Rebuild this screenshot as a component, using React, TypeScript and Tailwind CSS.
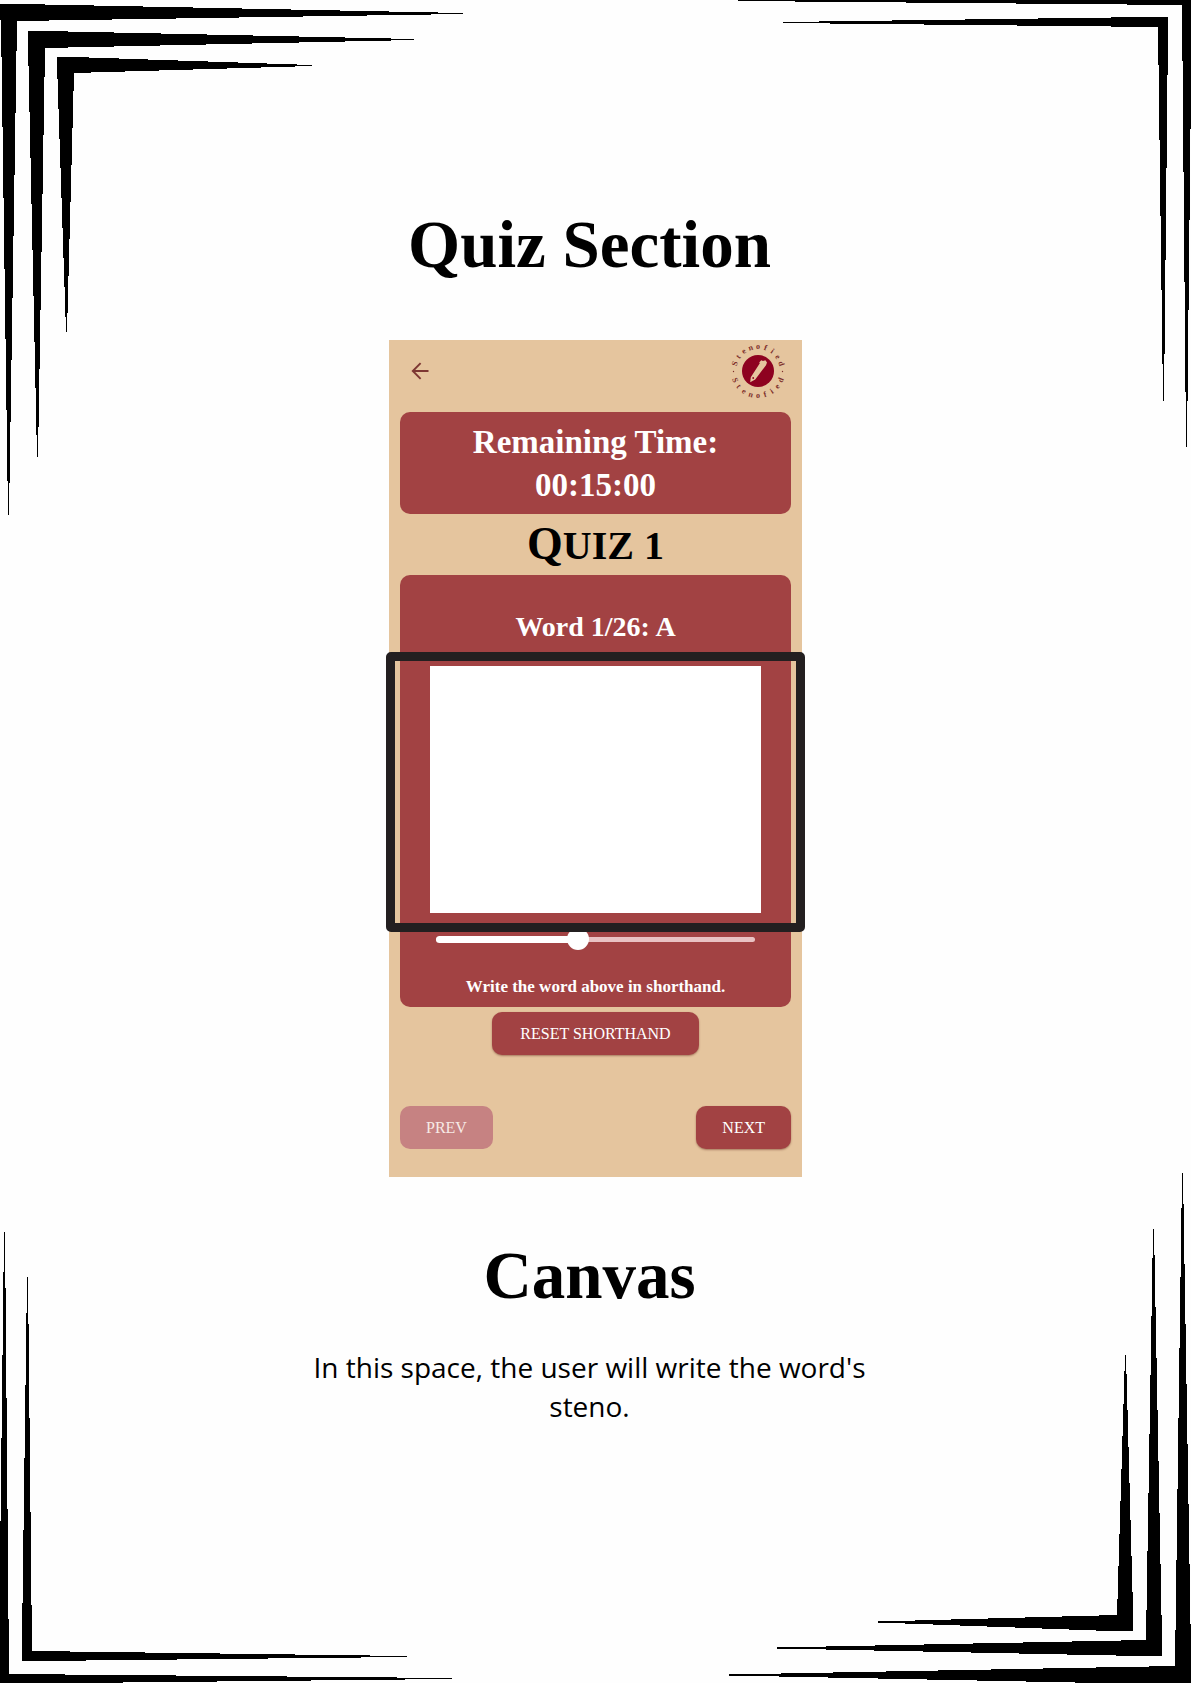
import { useState } from "react";

/* Tapering ink strokes that decorate the four corners of the sheet. */
function Corners() {
  return (
    <div aria-hidden="true" className="pointer-events-none absolute inset-0 overflow-hidden">
      <svg className="absolute left-0 top-0" width="480" height="520" viewBox="0 0 480 520" shapeRendering="crispEdges">
        <polygon points="0,4 20,4 463,13 463,14 17,21 9,515 8,515 1,21 0,20" />
        <polygon points="28,31 45,31 414,39 414,40 45,48 38,457 37,457 28,42" />
        <polygon points="57,57 74,57 312,65 312,66 74,73 67,332 66,332 57,64" />
      </svg>
      <svg className="absolute right-0 top-0" width="461" height="460" viewBox="730 0 461 460" shapeRendering="crispEdges">
        <polygon points="738,0 1192,0 1191.5,40 1187,447 1186,447 1182,5 738,1" />
        <polygon points="783,22 1148,17 1168,17 1168,30 1164,401 1163,401 1158,27 783,23" />
      </svg>
      <svg className="absolute bottom-0 left-0" width="460" height="463" viewBox="0 1220 460 463" shapeRendering="crispEdges">
        <polygon points="4,1232 5,1232 9,1674 452,1678 452,1679 30,1683.5 0,1684 0,1564" />
        <polygon points="27,1277 28,1277 32,1651 407,1656 407,1657 40,1661 22,1661 22,1640" />
      </svg>
      <svg className="absolute bottom-0 right-0" width="471" height="523" viewBox="720 1160 471 523" shapeRendering="crispEdges">
        <polygon points="1182,1173 1183,1173 1191.5,1683 1100,1683 729,1675.5 729,1674.5 1175,1666" />
        <polygon points="1153,1229 1154,1229 1162,1640 1162,1656 1140,1656 777,1648.5 777,1647.5 1146,1640" />
        <polygon points="1125,1355 1126,1355 1133,1610 1133,1631 1110,1631 878,1622.5 878,1621.5 1117,1615" />
      </svg>
    </div>
  );
}

function Logo() {
  return (
    <svg
      role="img"
      aria-label="Stenofied"
      className="h-14 w-14"
      viewBox="-28 -28 56 56"
      fontFamily='"Liberation Serif", serif'
      fontWeight="700"
      fontSize="8"
      fill="#7d2f2b"
    >
      <defs>
        <path id="ring-top" d="M-22 0A22 22 0 0 1 22 0" />
        <path id="ring-bottom" d="M-27 0A27 27 0 0 0 27 0" />
      </defs>
      <circle r="16" fill="#8e0220" />
      <path
        fill="#e5c59e"
        d="M-7.8 11.2L-7.2 6.2L1.8 -7.8L1.2 -8.6L3.2 -10.8L5 -10L7.4 -10.8L9 -8.6L8 -5.8L-2.8 8.6Z"
      />
      <circle cx="-4.8" cy="7" r="0.9" fill="#8e0220" />
      <circle cx="-24.5" cy="0.5" r="0.7" />
      <circle cx="24.5" cy="0.5" r="0.7" />
      {["S", "t", "e", "n", "o", "f", "i", "e", "d"].map((c, i) => (
        <g key={i}>
          <text textAnchor="middle">
            <textPath href="#ring-top" startOffset={`${10 + i * 10}%`}>{c}</textPath>
          </text>
          <text textAnchor="middle">
            <textPath href="#ring-bottom" startOffset={`${12 + i * 9.5}%`}>{c}</textPath>
          </text>
        </g>
      ))}
    </svg>
  );
}

function StrokeSlider() {
  const [value, setValue] = useState(44);
  return (
    <div className="relative mx-9 -mt-1 flex h-[22px] items-center">
      <div className="h-[5px] w-full rounded-full bg-[#e9c2c3]" />
      <div className="absolute left-0 h-[7px] rounded-full bg-white" style={{ width: `${value}%` }} />
      <input
        type="range"
        aria-label="Stroke width"
        min={0}
        max={100}
        value={value}
        onChange={(e) => setValue(Number(e.target.value))}
        className="absolute inset-0 h-[22px] w-full cursor-pointer appearance-none bg-transparent [&::-webkit-slider-thumb]:h-[22px] [&::-webkit-slider-thumb]:w-[22px] [&::-webkit-slider-thumb]:appearance-none [&::-webkit-slider-thumb]:rounded-full [&::-webkit-slider-thumb]:bg-white"
      />
    </div>
  );
}

export default function App() {
  return (
    <div className="relative min-h-screen w-full bg-[#fefefe] font-['Liberation_Serif',serif] text-black">
      <Corners />
      <main className="relative flex flex-col items-center px-4 pb-12 pt-[204px]">
        <h1 className="pr-3 text-center text-[67px] font-bold leading-[80px]">Quiz Section</h1>

        <section aria-label="Quiz 1" className="mt-14 w-full max-w-[413px] bg-[#e5c59e] px-[11px] pb-7">
          <header className="flex h-[72px] items-center justify-between pb-[11px] pl-2 pr-[5px]">
            <button type="button" aria-label="Back" className="p-[3px]">
              <svg width="18" height="18" viewBox="0 0 18 18" fill="none" stroke="#7d3732" strokeWidth="1.9">
                <path d="M17.5 9H1.8M9.6 1.2L1.8 9L9.6 16.8" />
              </svg>
            </button>
            <Logo />
          </header>

          <div
            role="timer"
            className="rounded-[10px] bg-[#a24243] pb-[7px] pt-[9px] text-center text-[33px] font-bold leading-[43px] text-white"
          >
            <p>Remaining Time:</p>
            <p>00:15:00</p>
          </div>

          <h2 className="text-center text-[40px] font-bold leading-[59px]">
            <span className="text-[46px]">Q</span>UIZ 1
          </h2>

          <div className="rounded-[10px] bg-[#a24243] pb-2 pt-[34px] text-white">
            <h3 className="text-center text-[28px] font-bold leading-9">Word 1/26: A</h3>
            <div className="relative z-10 -mx-[14px] mt-[7px] rounded-[5px] border-[9px] border-[#231f20] px-[35px] pb-[10px] pt-[5px]">
              <canvas aria-label="Shorthand drawing area" className="block h-[247px] w-full bg-white" />
            </div>
            <StrokeSlider />
            <p className="mt-[25px] text-center text-[17px] font-bold leading-6">Write the word above in shorthand.</p>
          </div>

          <div className="mt-[5px] flex justify-center">
            <button
              type="button"
              className="h-[43px] rounded-[10px] bg-[#a24243] px-7 text-[16px] leading-6 text-white shadow-[0_1px_2px_rgba(90,30,20,0.45)]"
            >
              RESET SHORTHAND
            </button>
          </div>

          <nav aria-label="Words" className="mt-[51px] flex justify-between">
            <button
              type="button"
              disabled
              className="h-[43px] rounded-[10px] bg-[#c68282] px-[26px] text-[16px] leading-6 text-[#f7eae6]"
            >
              PREV
            </button>
            <button
              type="button"
              className="h-[43px] rounded-[10px] bg-[#a24243] px-[26px] text-[16px] leading-6 text-white shadow-[0_1px_2px_rgba(90,30,20,0.45)]"
            >
              NEXT
            </button>
          </nav>
        </section>

        <h2 className="mt-[58px] pr-3 text-center text-[67px] font-bold leading-[80px]">Canvas</h2>
        <p className="mt-[33px] max-w-[600px] pr-3 text-center font-['Open_Sans',sans-serif] text-[28px] leading-[39px]">
          In this space, the user will write the word's steno.
        </p>
      </main>
    </div>
  );
}
